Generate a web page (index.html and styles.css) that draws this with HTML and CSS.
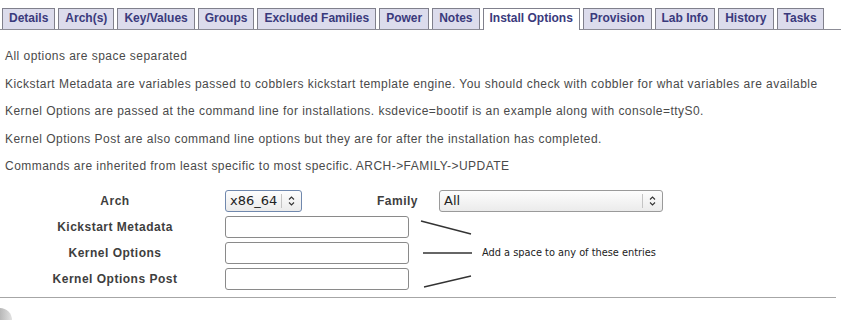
FILE: index.html
```html
<!DOCTYPE html>
<html lang="en">
<head>
    <meta charset="UTF-8">
    <title>Install Options</title>
    <link rel="stylesheet" href="styles.css">
</head>
<body>
    <div class="tabs">
        <a class="tab">Details</a>
        <a class="tab">Arch(s)</a>
        <a class="tab">Key/Values</a>
        <a class="tab">Groups</a>
        <a class="tab">Excluded Families</a>
        <a class="tab">Power</a>
        <a class="tab">Notes</a>
        <a class="tab active">Install Options</a>
        <a class="tab">Provision</a>
        <a class="tab">Lab Info</a>
        <a class="tab">History</a>
        <a class="tab">Tasks</a>
    </div>

    <div class="content">
        <p>All options are space separated</p>
        <p>Kickstart Metadata are variables passed to cobblers kickstart template engine. You should check with cobbler for what variables are available</p>
        <p>Kernel Options are passed at the command line for installations. ksdevice=bootif is an example along with console=ttyS0.</p>
        <p>Kernel Options Post are also command line options but they are for after the installation has completed.</p>
        <p>Commands are inherited from least specific to most specific. ARCH-&gt;FAMILY-&gt;UPDATE</p>

        <div class="form">
            <div class="arch-row">
                <label class="field-label">Arch</label>
                <div class="select select-arch">
                    <span class="select-value">x86_64</span>
                    <span class="select-caret">
                        <svg width="7" height="10" viewBox="0 0 7 10"><path d="M1 3.5 L3.5 1 L6 3.5 M1 6.5 L3.5 9 L6 6.5" fill="none" stroke="#333" stroke-width="1.1"/></svg>
                    </span>
                </div>
                <label class="family-label">Family</label>
                <div class="select select-family">
                    <span class="select-value">All</span>
                    <span class="select-caret">
                        <svg width="7" height="10" viewBox="0 0 7 10"><path d="M1 3.5 L3.5 1 L6 3.5 M1 6.5 L3.5 9 L6 6.5" fill="none" stroke="#333" stroke-width="1.1"/></svg>
                    </span>
                </div>
            </div>

            <div class="options">
                <div class="fields">
                    <label class="field-label">Kickstart Metadata</label>
                    <input type="text" class="text-input">
                    <label class="field-label">Kernel Options</label>
                    <input type="text" class="text-input">
                    <label class="field-label">Kernel Options Post</label>
                    <input type="text" class="text-input">
                </div>
                <svg class="pointers" width="56" height="74" viewBox="0 0 56 74">
                    <line x1="2" y1="5" x2="52" y2="18" stroke="#333" stroke-width="1.3"/>
                    <line x1="4" y1="37" x2="53" y2="37" stroke="#333" stroke-width="1.3"/>
                    <line x1="5" y1="71" x2="52" y2="60" stroke="#333" stroke-width="1.3"/>
                </svg>
                <span class="hint">Add a space to any of these entries</span>
            </div>
        </div>
    </div>

    <hr class="divider">
    <div class="corner"></div>
</body>
</html>
```

FILE: styles.css
```css
body {
    margin: 0;
    font-family: 'Liberation Sans', Arial, sans-serif;
    font-size: 12px;
    color: #4a4a4a;
    background-color: #ffffff;
    overflow: hidden;
}
.tabs {
    display: flex;
    gap: 3px;
    padding: 8px 0 0 2px;
    border-bottom: 1px solid #8c8c96;
}
.tab {
    height: 20px;
    line-height: 19px;
    padding: 0 6px;
    border: 1px solid #80808c;
    border-bottom: none;
    background-color: #dcdcec;
    color: #3a3a7c;
    font-weight: bold;
    font-size: 12px;
    cursor: pointer;
}
.tab.active {
    background-color: #ffffff;
    margin-bottom: -1px;
    height: 21px;
}
.content {
    padding: 7px 5px 0 5px;
}
.content p {
    margin: 12px 0;
    line-height: 15.6px;
    letter-spacing: 0.46px;
}
.form {
    margin-top: 15px;
}
.arch-row {
    display: grid;
    grid-template-columns: 220px 150px 64px 224px;
    height: 22px;
    align-items: center;
}
.field-label {
    font-weight: bold;
    color: #3e3e3e;
    text-align: center;
    letter-spacing: 0.5px;
}
.family-label {
    font-weight: bold;
    color: #3e3e3e;
    letter-spacing: 0.5px;
    padding-left: 2px;
}
.select {
    display: flex;
    align-items: center;
    height: 22px;
    box-sizing: border-box;
    border: 1px solid #9a9a9a;
    border-radius: 3px;
    background: linear-gradient(#fdfdfd, #ebebeb);
    font-family: 'DejaVu Sans', sans-serif;
    font-size: 13px;
    color: #222222;
}
.select-arch {
    width: 77px;
    border-color: #7088ad;
}
.select-family {
    width: 224px;
}
.select-value {
    flex: 1;
    padding-left: 4px;
    line-height: 20px;
}
.select-caret {
    display: flex;
    align-items: center;
    justify-content: center;
    width: 19px;
    height: 14px;
    border-left: 1px solid #c4c4c4;
}
.options {
    display: flex;
    align-items: center;
    margin-top: 4px;
}
.fields {
    display: grid;
    grid-template-columns: 220px 184px;
    grid-auto-rows: 22px;
    row-gap: 4px;
    align-items: center;
}
.text-input {
    width: 184px;
    height: 22px;
    box-sizing: border-box;
    margin: 0;
    border: 1px solid #8a8a8a;
    border-radius: 3px;
    background-color: #ffffff;
}
.pointers {
    margin-left: 10px;
}
.hint {
    margin-left: 7px;
    font-family: 'DejaVu Sans', sans-serif;
    font-size: 9.8px;
    color: #222222;
}
.divider {
    border: none;
    border-top: 1px solid #a6a6a6;
    margin: 7px 5px 0 0;
}
.corner {
    width: 12px;
    height: 14px;
    margin-top: 10px;
    background: linear-gradient(to right, #b8b8b8, #e2e2e2);
    border-top-right-radius: 14px;
}
```
